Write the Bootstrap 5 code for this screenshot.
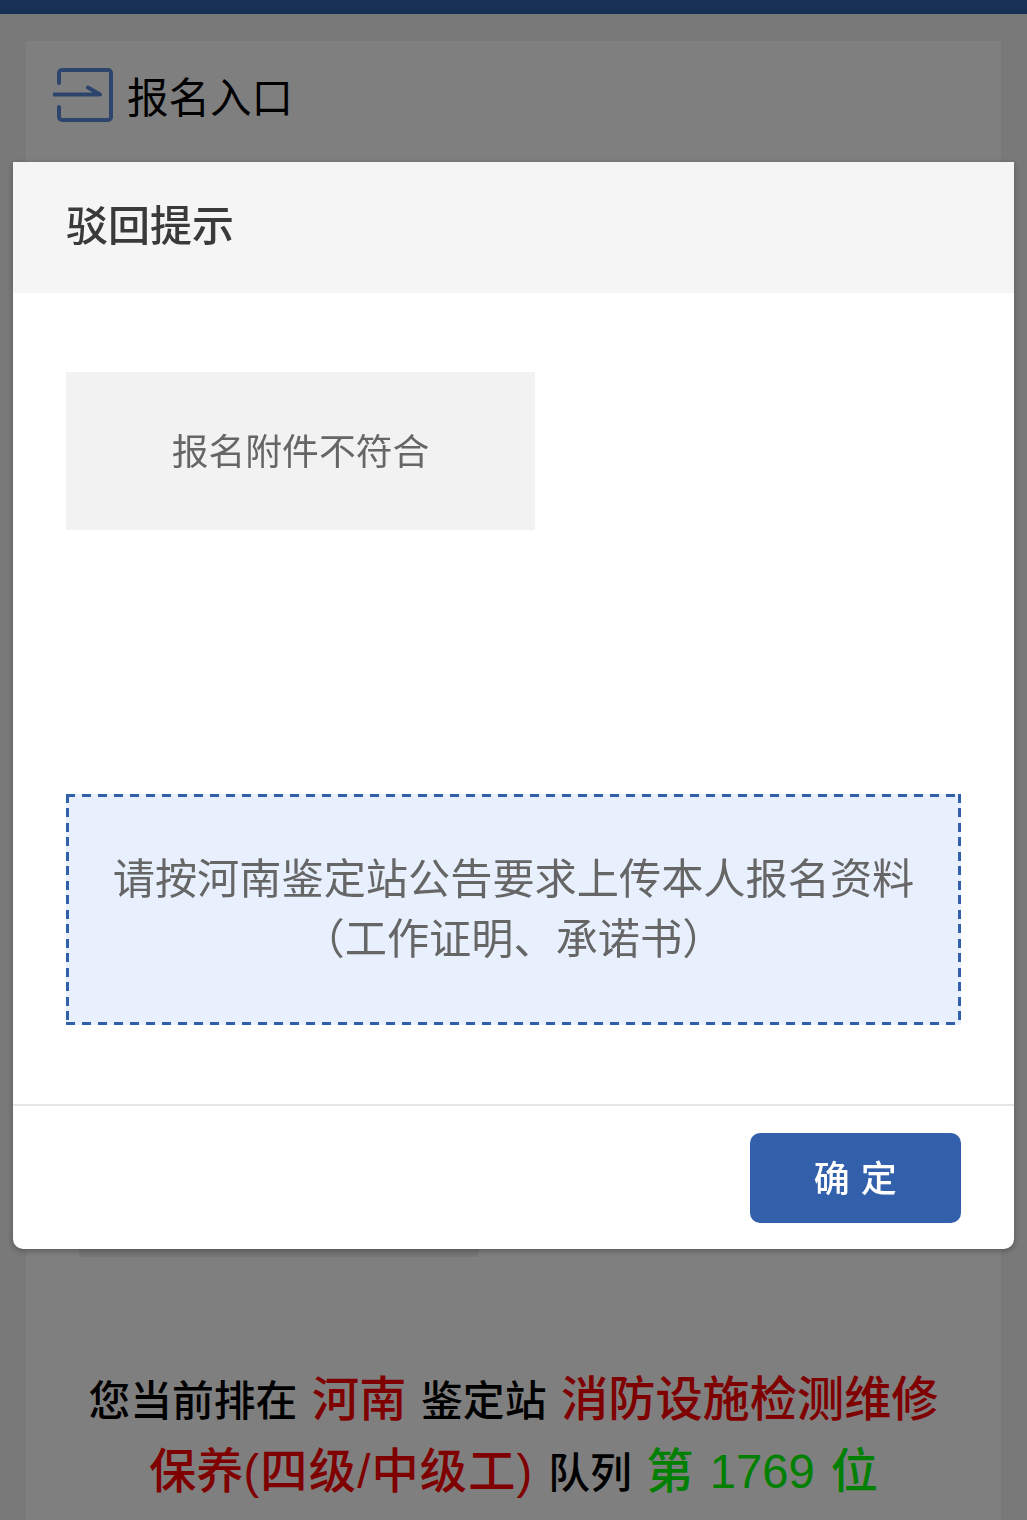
<!DOCTYPE html>
<html lang="zh-CN">
<head>
<meta charset="utf-8">
<title>驳回提示</title>
<link href="https://cdn.jsdelivr.net/npm/bootstrap@5.3.0/dist/css/bootstrap.min.css" rel="stylesheet">
<style>
html, body { height: 100%; overflow: hidden; }
body { background: #f3f3f3; font-family: "Liberation Sans", "Noto Sans CJK SC", sans-serif; }
.top-strip { height: 14px; background: #3360ab; }
.page-panel { margin: 27px 26px 0; background: #fff; height: 1479px; overflow: hidden; }
.panel-head { padding: 28px 27px 0; gap: 14px; color: #000; font-size: 41.5px; line-height: 60px; }
.panel-head svg { width: 60px; height: 56px; flex: none; margin-top: -2px; }
.under-block { margin: 528px 0 0 53px; width: 399px; height: 600px; background: #eee; }
.queue-text { margin-top: 108px; font-size: 41.8px; line-height: 70px; text-align: center; color: #000; font-weight: 500; word-spacing: 3px; }
.queue-text .hot { color: #f00; font-size: 47.2px; }
.queue-text .go { color: #0f0; font-size: 47.2px; }
.queue-text .wide-run { letter-spacing: 1.2px; }
.reject-dialog { margin: 162px 13px 0; max-width: none; width: auto; }
.reject-content { border: 0; border-radius: 0 0 10px 10px; box-shadow: 0 2px 6px rgba(0,0,0,.3); }
.reject-head { height: 131px; padding: 0 53px 2px; background: #f5f5f5; border: 0; border-radius: 0; }
.reject-title { font-size: 42px; font-weight: 500; color: #3a3a3a; line-height: 58px; margin: 0; }
.reject-body { padding: 79px 53px 79px; }
.reason-box { width: 469px; height: 158px; margin-bottom: 264px; padding-top: 3px; background: #f2f2f2; color: #666; font-size: 36.8px; }
.notice-box {
  height: 231px; color: #666; font-size: 42.2px; line-height: 60px; text-align: center;
  background-color: #e8f0fe;
  background-image:
    repeating-linear-gradient(90deg, #3360ab 0 9px, transparent 9px 16px),
    repeating-linear-gradient(90deg, #3360ab 0 9px, transparent 9px 16px),
    repeating-linear-gradient(180deg, #3360ab 0 9px, transparent 9px 14.5px),
    repeating-linear-gradient(180deg, #3360ab 0 9px, transparent 9px 14.5px);
  background-size: 100% 3px, 100% 3px, 3px 100%, 3px 100%;
  background-position: 0 0, 0 100%, 0 0, 100% 0;
  background-repeat: no-repeat;
}
.reject-foot { height: 145px; padding: 27px 53px 0; border-top: 2px solid #e5e5e5; align-items: flex-start; border-radius: 0; }
.reject-foot .btn { margin: 0; width: 211px; height: 90px; padding: 3px 0 0; border: 0; border-radius: 10px; background: #3360ab; color: #fff; font-size: 36px; font-weight: 500; letter-spacing: .5px; }
</style>
</head>
<body>
<div class="top-strip"></div>
<div class="page-panel">
  <div class="panel-head d-flex align-items-start">
    <svg viewBox="0 0 60 56" fill="none" stroke="#5a8ad8" stroke-width="4" aria-hidden="true">
      <path d="M6 16V6a3 3 0 0 1 3-3h46a3 3 0 0 1 3 3v44a3 3 0 0 1-3 3H9a3 3 0 0 1-3-3V40" stroke-linecap="round"/>
      <path d="M1 27.5h46l-12-7" stroke-linecap="round" stroke-linejoin="round"/>
    </svg>
    <span>报名入口</span>
  </div>
  <div class="under-block"></div>
  <div class="queue-text">
    您当前排在 <span class="hot">河南</span> 鉴定站 <span class="hot">消防设施检测维修<br>保养<span class="wide-run">(四级/中级工)</span></span> 队列 <span class="go">第 1769 位</span>
  </div>
</div>

<div class="modal-backdrop show"></div>
<div class="modal d-block" tabindex="-1">
  <div class="modal-dialog reject-dialog">
    <div class="modal-content reject-content">
      <div class="modal-header reject-head">
        <h5 class="modal-title reject-title">驳回提示</h5>
      </div>
      <div class="modal-body reject-body">
        <div class="reason-box d-flex align-items-center justify-content-center">报名附件不符合</div>
        <div class="notice-box d-flex align-items-center justify-content-center">
          <div>请按河南鉴定站公告要求上传本人报名资料<br>（工作证明、承诺书）</div>
        </div>
      </div>
      <div class="modal-footer reject-foot">
        <button type="button" class="btn">确 定</button>
      </div>
    </div>
  </div>
</div>
<script src="https://cdn.jsdelivr.net/npm/bootstrap@5.3.0/dist/js/bootstrap.bundle.min.js"></script>
</body>
</html>
